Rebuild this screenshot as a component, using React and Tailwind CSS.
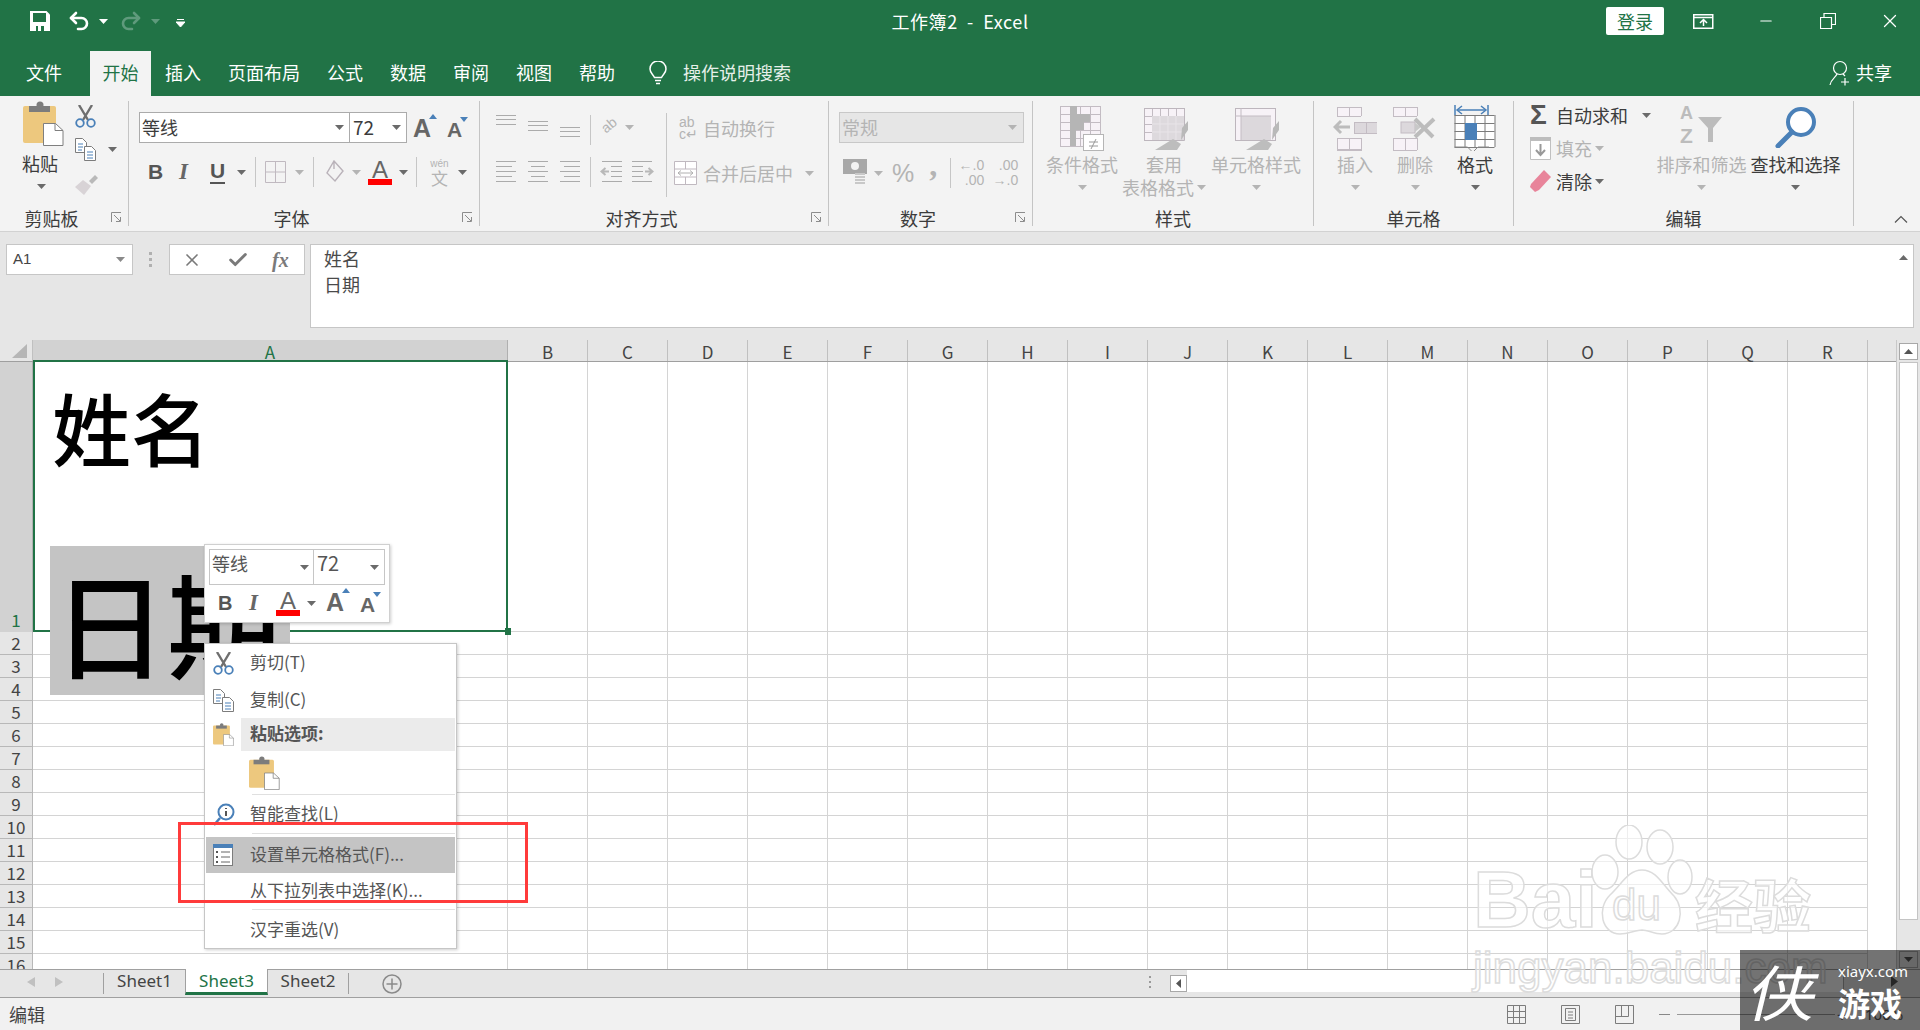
import React from 'react';
import { Undo2, Redo2, Minus, X, Check } from 'lucide-react';

const GREY = '#b4b4b4';
const BLUE = '#4a80b8';

const COLUMNS = ['B', 'C', 'D', 'E', 'F', 'G', 'H', 'I', 'J', 'K', 'L', 'M', 'N', 'O', 'P', 'Q', 'R'];
const ROWS = [2, 3, 4, 5, 6, 7, 8, 9, 10, 11, 12, 13, 14, 15];

function Tri({ color = '#6a6a6a', className = '', up = false }) {
  return (
    <svg width="9" height="5" viewBox="0 0 9 5" className={`shrink-0 ${className}`}>
      <path d={up ? 'M0 5h9L4.5 0z' : 'M0 0h9L4.5 5z'} fill={color} />
    </svg>
  );
}

function Launcher() {
  return (
    <svg width="11" height="11" viewBox="0 0 11 11" className="mb-[2px] mr-[6px]">
      <path d="M.5 10V.5H10M3 3l6 6M5 9.5h4.5V5" fill="none" stroke="#8c8c8c" />
    </svg>
  );
}

function PasteIcon({ w = 41, h = 45 }) {
  return (
    <svg width={w} height={h} viewBox="0 0 41 45" className="shrink-0">
      <rect x="0" y="5" width="33" height="37" rx="2" fill="#edc87e" />
      <rect x="6" y="5" width="21" height="6" fill="#7c7c7c" />
      <circle cx="17" cy="4" r="3.5" fill="#7c7c7c" />
      <path d="M20.5 22.5h12l7.5 7v15h-19.5z" fill="#fff" stroke="#7f7f7f" />
      <path d="M32 22.5v7h8" fill="none" stroke="#7f7f7f" />
    </svg>
  );
}

function ScissorsIcon({ size = 21 }) {
  return (
    <svg width={size} height={size + 2} viewBox="0 0 21 23" className="shrink-0">
      <path d="M4 0l9 15M17 0L8 15" stroke="#6f6f6f" strokeWidth="2.4" fill="none" />
      <circle cx="5" cy="18" r="3.8" fill="none" stroke={BLUE} strokeWidth="1.8" />
      <circle cx="16" cy="18" r="3.8" fill="none" stroke={BLUE} strokeWidth="1.8" />
    </svg>
  );
}

function CopyIcon() {
  return (
    <svg width="21" height="23" viewBox="0 0 21 23" className="shrink-0">
      <path d="M.5.5h7l4 4v10H.5z" fill="#fff" stroke="#7c7c7c" />
      <path d="M9.5 8.5h7l4 4v10h-11z" fill="#fff" stroke="#7c7c7c" />
      <path d="M3 6h5M3 9h5M3 12h4M12 14h6M12 17h6M12 20h6" stroke={BLUE} />
    </svg>
  );
}

function BrushIcon() {
  return (
    <svg width="23" height="21" viewBox="0 0 23 21" className="shrink-0">
      <path d="M14 7l6-6 3 3-6 6z" fill="#b9b9b9" />
      <path d="M0 13l8-7 8 6-7 9z" fill="#d8d3d6" />
    </svg>
  );
}

function BigA({ size = 25, color = '#666666', mark }) {
  return (
    <span className="relative inline-flex shrink-0 font-['Liberation_Sans',sans-serif] font-bold leading-none" style={{ fontSize: size, color }}>
      A
      {mark && (
        <svg width="8" height="5" viewBox="0 0 8 5" className="absolute right-[-6px] top-[-2px]">
          <path d={mark === 'up' ? 'M0 5h8L4 0z' : 'M0 0h8L4 5z'} fill={BLUE} />
        </svg>
      )}
    </span>
  );
}

function FontColorA({ barWidth = 24 }) {
  return (
    <span className="flex shrink-0 flex-col items-center">
      <span className="font-['Liberation_Sans',sans-serif] text-[24px] leading-[19px] text-[#666]">A</span>
      <span className="h-[6px] bg-[#ff0000]" style={{ width: barWidth }} />
    </span>
  );
}

function AlignV({ ys }) {
  return (
    <svg width="20" height="24" viewBox="0 0 20 24" className="shrink-0">
      {ys.map((y) => (
        <path key={y} d={`M0 ${y + 0.5}H20`} stroke="#ababab" />
      ))}
    </svg>
  );
}

function AlignH({ lines }) {
  return (
    <svg width="20" height="22" viewBox="0 0 20 22" className="shrink-0">
      {lines.map(([a, b], i) => (
        <path key={i} d={`M${a} ${i * 5 + 0.5}H${b}`} stroke="#ababab" />
      ))}
    </svg>
  );
}

function IndentIcon({ flip }) {
  return (
    <svg width="22" height="22" viewBox="0 0 22 22" className="shrink-0" style={flip ? { transform: 'scaleX(-1)' } : undefined}>
      <path d="M2 .5h20M11 5.5h11M11 10.5h11M11 15.5h11M2 20.5h20" stroke="#ababab" />
      <path d="M9 10.5H2M5.5 7l-4 3.5 4 3.5" stroke="#b8b8b8" strokeWidth="2" fill="none" />
    </svg>
  );
}

function MiniGrid({ cols, rows, cw = 10, ch = 10, stroke = '#c3bcc3', fill = '#f7f2f7' }) {
  const w = cols * cw;
  const h = rows * ch;
  const lines = [];
  for (let i = 0; i <= cols; i++) lines.push(`M${i * cw + 0.5} 0V${h}`);
  for (let i = 0; i <= rows; i++) lines.push(`M0 ${i * ch + 0.5}H${w}`);
  return (
    <>
      <rect width={w} height={h} fill={fill} />
      <path d={lines.join('')} stroke={stroke} fill="none" />
    </>
  );
}

function CondFormatIcon() {
  return (
    <svg width="44" height="45" viewBox="0 0 44 45">
      <MiniGrid cols={4} rows={5} cw={10} ch={8} />
      <rect x="10" y="0" width="7" height="8" fill="#b5b5b5" />
      <rect x="10" y="8" width="20" height="8" fill="#b5b5b5" />
      <rect x="10" y="16" width="14" height="8" fill="#b5b5b5" />
      <rect x="10" y="24" width="6" height="16" fill="#b5b5b5" />
      <rect x="23.5" y="28.5" width="20" height="16" fill="#fff" stroke="#b5b5b5" />
      <path d="M29 36h9M29 40h9M36 33l-5 10" stroke="#9a9a9a" fill="none" />
    </svg>
  );
}

function TableBrush() {
  return (
    <>
      <path d="M38 20l6-7v9l-7 10z" fill="#b9b9b9" />
      <path d="M29 31l8 5-4 6H11z" fill="#bdbdbd" />
    </>
  );
}

function TableStyleIcon() {
  return (
    <svg width="44" height="43" viewBox="0 0 44 43">
      <MiniGrid cols={5} rows={4} cw={8} ch={8} />
      <rect x="8" y="8" width="32" height="24" fill="#ddd9dd" />
      <path d="M16 8v24M24 8v24M32 8v24M8 16h32M8 24h32" stroke="#e8e4e8" />
      <path d="M.5.5h40v32H.5z" fill="none" stroke="#bdb6bd" />
      <TableBrush />
    </svg>
  );
}

function CellStyleIcon() {
  return (
    <svg width="44" height="43" viewBox="0 0 44 43">
      <rect x=".5" y=".5" width="40" height="32" fill="#f7f2f7" stroke="#bdb6bd" />
      <rect x="6" y="8" width="30" height="24" fill="#dcd8dc" />
      <path d="M6 0v32M0 8h36" stroke="#c3bcc3" />
      <TableBrush />
    </svg>
  );
}

function InsertIcon() {
  return (
    <svg width="44" height="44" viewBox="0 0 44 44">
      <g transform="translate(4 0)"><MiniGrid cols={2} rows={1} cw={12} ch={9} /></g>
      <g transform="translate(21 15)"><MiniGrid cols={2} rows={1} cw={12} ch={11} fill="#dcd8dc" /></g>
      <path d="M17 20H2M8 14l-6 6 6 6" fill="none" stroke="#bcbcbc" strokeWidth="3" />
      <g transform="translate(4 31)"><MiniGrid cols={2} rows={1} cw={12} ch={11} /></g>
      <path d="M4.500 31v13M28.500 31v13M4 43.500h25M16.500 31v12" stroke="#c3bcc3" />
    </svg>
  );
}

function DeleteIcon() {
  return (
    <svg width="44" height="44" viewBox="0 0 44 44">
      <MiniGrid cols={2} rows={1} cw={12} ch={9} />
      <rect x="8" y="15" width="14" height="11" fill="#dcd8dc" stroke="#c3bcc3" />
      <path d="M22 16l6 4-6 5z" fill="#c8c8c8" />
      <path d="M22 12l18 18M41 12L22 30" stroke="#bcbcbc" strokeWidth="4" />
      <g transform="translate(0 31)"><MiniGrid cols={2} rows={1} cw={12} ch={12} /></g>
      <path d="M.5 31v13M12.500 31v13M.5 43.500h23" stroke="#c3bcc3" />
    </svg>
  );
}

function FormatIcon() {
  return (
    <svg width="42" height="47" viewBox="0 0 42 47">
      <path d="M1 1v10M34 1v10M3 6h29" stroke={BLUE} strokeWidth="1.5" fill="none" />
      <path d="M8 2L3 6l5 4M27 2l5 4-5 4" stroke={BLUE} strokeWidth="1.5" fill="none" />
      <g transform="translate(0.500 11)"><MiniGrid cols={4} rows={4} cw={10} ch={8} stroke="#7b7b7b" fill="#fff" /></g>
      <rect x="11" y="19" width="12" height="17" fill={BLUE} />
      <path d="M.5 43h13l4 4M20 47l4-4h11" fill="none" stroke="#8a8a8a" />
    </svg>
  );
}

function SortIcon() {
  return (
    <svg width="43" height="40" viewBox="0 0 43 40">
      <text x="0" y="14" fontFamily="Liberation Sans" fontWeight="700" fontSize="18" fill="#bcbcbc">A</text>
      <text x="0" y="38" fontFamily="Liberation Sans" fontWeight="700" fontSize="21" fill="#bcbcbc">Z</text>
      <path d="M18 12h24l-9 11v14h-5V23z" fill="#bcbcbc" />
    </svg>
  );
}

function FindIcon({ size = 42 }) {
  return (
    <svg width={size} height={size} viewBox="0 0 42 42">
      <circle cx="26" cy="16" r="13" fill="#fff" stroke={BLUE} strokeWidth="4" />
      <path d="M17 26L3 40" stroke={BLUE} strokeWidth="5" strokeLinecap="round" />
    </svg>
  );
}

function Group({ width, title, launcher, children }) {
  return (
    <div className="flex h-[125px] shrink-0 flex-col border-r border-[#c4c4c4]" style={{ width }}>
      <div className="flex-1 min-h-0">{children}</div>
      <div className="flex h-[16px] items-center text-[18px] leading-[16px] text-[#3c3c3c]">
        <div className="flex-1 whitespace-nowrap text-center">{title}</div>
        {launcher && <div className="flex w-[25px] justify-end"><Launcher /></div>}
      </div>
    </div>
  );
}

function Sep({ className = '' }) {
  return <span className={`h-[30px] w-px shrink-0 bg-[#c6c6c6] ${className}`} />;
}

function RibbonButton({ icon, label, label2, disabled, width, iconClass = '', className = '' }) {
  return (
    <div className={`flex shrink-0 flex-col items-center ${className}`} style={{ width }}>
      <div className={`flex h-[50px] items-end justify-center ${iconClass}`}>{icon}</div>
      <div className={`mt-[2px] flex flex-col items-center text-[18px] leading-[23px] whitespace-nowrap ${disabled ? 'text-[#b4b4b4]' : 'text-[#3c3c3c]'}`}>
        <span>{label}</span>
        {label2 ? <span className="flex items-center gap-[3px]">{label2}<Tri color={GREY} /></span> : <Tri className="mt-[9px]" color={disabled ? GREY : '#6a6a6a'} />}
      </div>
    </div>
  );
}

function TitleBar() {
  return (
    <div className="grid h-[48px] grid-cols-[1fr_auto_1fr] items-center bg-[#217346] pb-[6px] text-white">
      <div className="flex items-center pl-[30px]">
        <svg width="20" height="20" viewBox="0 0 20 20">
          <path d="M0 0h16.500L20 3.500V20H0z" fill="#fff" />
          <path d="M3 2h13v9H3z" fill="#217346" />
          <path d="M6 15h2v5H6zM11 15h3v5h-3z" fill="#217346" />
        </svg>
        <Undo2 size={24} strokeWidth={2.6} className="ml-[17px]" />
        <Tri color="#fff" className="ml-[8px]" />
        <Redo2 size={24} strokeWidth={2.6} className="ml-[11px] text-[#5f9a7c]" />
        <Tri color="#5f9a7c" className="ml-[8px]" />
        <svg width="9" height="9" viewBox="0 0 9 9" className="ml-[16px] mt-[4px]">
          <path d="M1 .5h7M0 3h9L4.500 8z" stroke="#fff" strokeWidth="1" fill="#fff" />
        </svg>
      </div>
      <div className="whitespace-pre text-[18px] tracking-[0.6px]">工作簿2  -  Excel</div>
      <div className="flex items-center justify-end">
        <div className="flex h-[28px] w-[58px] items-center justify-center rounded-[2px] bg-white text-[18px] text-[#217346]">登录</div>
        <svg width="21" height="15" viewBox="0 0 21 15" className="ml-[29px]">
          <path d="M.75.75h19v13.500h-19zM0 3.500h20" fill="none" stroke="#fff" strokeWidth="1.500" />
          <path d="M10.500 12V6M7 9l3.500-3.500L14 9" fill="none" stroke="#fff" strokeWidth="1.500" />
        </svg>
        <Minus size={18} strokeWidth={1.4} className="ml-[43px]" />
        <svg width="16" height="16" viewBox="0 0 16 16" className="ml-[45px]">
          <path d="M.5 4.500h11v11H.5zM4 4.500V.5h11.500v11H11.500" fill="none" stroke="#fff" strokeWidth="1.200" />
        </svg>
        <X size={22} strokeWidth={1.4} className="ml-[43px] mr-[19px]" />
      </div>
    </div>
  );
}

function TabBar() {
  const tabs = ['插入', '页面布局', '公式', '数据', '审阅', '视图', '帮助'];
  return (
    <div className="flex h-[48px] items-end bg-[#217346] text-[18px] text-white">
      <div className="ml-[13px] flex h-[45px] items-center px-[13px] pb-[2px]">文件</div>
      <div className="ml-[15px] flex h-[45px] w-[61px] items-center justify-center bg-[#f3f3f3] pb-[2px] text-[#217346]">开始</div>
      {tabs.map((tab) => (
        <div key={tab} className="ml-px flex h-[45px] items-center px-[13px] pb-[2px]">{tab}</div>
      ))}
      <div className="flex h-[45px] items-center pb-[2px]">
        <svg width="20" height="24" viewBox="0 0 20 24" className="ml-[20px]">
          <path d="M6.500 16.500C5 13 2 12 2 8a8 8 0 0 1 16 0c0 4-3 5-4.500 8.500zM7 19.500h6M8 22.500h4" fill="none" stroke="#fff" strokeWidth="1.500" />
        </svg>
        <span className="ml-[15px] text-[#e6f0ea]">操作说明搜索</span>
      </div>
      <div className="ml-auto mr-[28px] flex h-[45px] items-center gap-[5px] pb-[2px]">
        <svg width="22" height="26" viewBox="0 0 22 26" fill="none" stroke="#fff" strokeWidth="1.200">
          <circle cx="11" cy="8" r="6.500" />
          <path d="M8 14c-1 3-6 5-7 11M14 14l2 2" />
          <path d="M16 18v7.500M12 22h8" />
        </svg>
        <span>共享</span>
      </div>
    </div>
  );
}

function Ribbon() {
  return (
    <div className="flex h-[136px] border-b border-[#d2d2d2] bg-[#f3f3f3] pt-[5px]">
      <Group width={129} title="剪贴板" launcher>
        <div className="flex">
          <div className="ml-[23px] flex w-[41px] flex-col">
            <PasteIcon />
            <span className="-ml-px mt-[5px] whitespace-nowrap text-[18px] leading-[24px] text-[#3c3c3c]">粘贴</span>
            <Tri className="ml-[14px] mt-[9px]" />
          </div>
          <div className="ml-[11px] flex flex-col pt-[4px]">
            <ScissorsIcon />
            <div className="mt-[10px] flex items-center"><CopyIcon /><Tri className="ml-[12px]" /></div>
            <div className="mt-[13px]"><BrushIcon /></div>
          </div>
        </div>
      </Group>

      <Group width={351} title="字体" launcher>
        <div className="ml-[10px] mt-[11px] flex h-[31px] items-center">
          <div className="flex h-[31px] w-[211px] items-center justify-between border border-[#ababab] bg-white pl-[2px] pr-[5px] text-[18px] text-[#3c3c3c]">等线<Tri /></div>
          <div className="flex h-[31px] w-[57px] items-center justify-between border border-l-0 border-[#ababab] bg-white pl-[3px] pr-[5px] text-[19px] text-[#3c3c3c]">72<Tri /></div>
          <span className="ml-[6px] mt-[2px]"><BigA size={25} mark="up" /></span>
          <span className="ml-[16px] mt-[5px]"><BigA size={21} mark="down" /></span>
        </div>
        <div className="mt-[13px] flex h-[32px] items-center">
          <span className="ml-[19px] w-[14px] font-['Liberation_Sans',sans-serif] text-[21px] font-bold text-[#555]">B</span>
          <span className="ml-[17px] w-[12px] font-['Liberation_Serif',serif] text-[23px] font-bold italic text-[#666]">I</span>
          <span className="ml-[19px] w-[15px] border-b-2 border-[#555] font-['Liberation_Sans',sans-serif] text-[21px] font-bold leading-[22px] text-[#555]">U</span>
          <Tri className="ml-[12px]" />
          <Sep className="ml-[9px]" />
          <svg width="21" height="22" viewBox="0 0 21 22" className="ml-[9px]">
            <path d="M.5.5h20v21H.5zM10.500.5v21M.5 11h20" fill="none" stroke="#c0b9c0" />
          </svg>
          <Tri className="ml-[9px]" color={GREY} />
          <Sep className="ml-[9px]" />
          <svg width="20" height="24" viewBox="0 0 20 24" className="ml-[11px]">
            <path d="M9 1l9 10-8 10-8-8zM9 1v8" fill="none" stroke="#b9b2b9" strokeWidth="1.400" />
          </svg>
          <Tri className="ml-[7px]" color={GREY} />
          <span className="ml-[7px]"><FontColorA /></span>
          <Tri className="ml-[7px]" />
          <Sep className="ml-[8px]" />
          <span className="ml-[12px] flex w-[21px] flex-col items-center leading-none text-[#b4b4b4]">
            <span className="font-['Liberation_Sans',sans-serif] text-[10px]">wén</span>
            <span className="text-[17px]">文</span>
          </span>
          <Tri className="ml-[8px]" />
        </div>
      </Group>

      <Group width={349} title="对齐方式" launcher>
        <div className="flex">
          <div className="ml-[16px] flex w-[170px] flex-col">
            <div className="mt-[14px] flex h-[24px] items-start">
              <AlignV ys={[0, 4, 9]} />
              <span className="ml-[12px]"><AlignV ys={[6, 10, 15]} /></span>
              <span className="ml-[12px]"><AlignV ys={[12, 16, 21]} /></span>
              <Sep className="ml-[10px]" />
              <span className="ml-[10px] rotate-[-40deg] font-['Liberation_Sans',sans-serif] text-[14px] leading-[20px] text-[#b4b4b4]">ab</span>
              <Tri className="ml-[8px] mt-[10px]" color={GREY} />
            </div>
            <div className="mt-[21px] flex h-[24px] items-center">
              <AlignH lines={[[0, 20], [0, 16], [0, 20], [0, 16], [0, 20]]} />
              <span className="ml-[12px]"><AlignH lines={[[0, 20], [3, 17], [0, 20], [3, 17], [0, 20]]} /></span>
              <span className="ml-[12px]"><AlignH lines={[[0, 20], [4, 20], [0, 20], [4, 20], [0, 20]]} /></span>
              <Sep className="ml-[10px]" />
              <span className="ml-[9px]"><IndentIcon /></span>
              <span className="ml-[10px]"><IndentIcon flip /></span>
            </div>
          </div>
          <Sep className="ml-0 mt-[12px] !h-[84px]" />
          <div className="flex flex-col text-[18px] text-[#b4b4b4]">
            <div className="mt-[11px] flex h-[32px] items-center">
              <span className="ml-[12px] flex w-[17px] flex-col font-['Liberation_Sans',sans-serif] text-[14px] leading-[12px]"><span>ab</span><span>c↵</span></span>
              <span className="ml-[7px]">自动换行</span>
            </div>
            <div className="mt-[13px] flex h-[32px] items-center">
              <svg width="23" height="24" viewBox="0 0 23 24" className="ml-[7px]">
                <path d="M.5.5h22v23H.5zM.5 8h22M.5 16h22M11.500.5V8M11.500 16v8" fill="#fff" stroke="#c0b9c0" />
                <path d="M4 12h15M7 9.500L4 12l3 2.500M16 9.500l3 2.500-3 2.500" fill="none" stroke="#b0b0b0" />
              </svg>
              <span className="ml-[6px]">合并后居中</span>
              <Tri className="ml-[12px]" color={GREY} />
            </div>
          </div>
        </div>
      </Group>

      <Group width={204} title="数字" launcher>
        <div className="ml-[10px] mt-[11px] flex h-[31px] w-[185px] items-center justify-between border border-[#c8c8c8] bg-[#e6e6e6] pl-[2px] pr-[6px] text-[18px] text-[#b4b4b4]">常规<Tri color={GREY} /></div>
        <div className="mt-[14px] flex h-[32px] items-center text-[#b4b4b4]">
          <svg width="24" height="28" viewBox="0 0 24 28" className="ml-[14px]">
            <rect width="24" height="15" fill="#a8a8a8" />
            <circle cx="12" cy="7" r="4" fill="#f3f3f3" />
            <path d="M12 15h10M12 18h10M12 21h10M12 24h10" stroke="#c8c8c8" strokeWidth="2" />
          </svg>
          <Tri className="ml-[7px]" color={GREY} />
          <span className="ml-[9px] font-['Liberation_Sans',sans-serif] text-[25px] leading-none">%</span>
          <span className="-mt-[16px] ml-[15px] font-['Liberation_Serif',serif] text-[32px] font-bold leading-[16px]">,</span>
          <Sep className="ml-[13px]" />
          <span className="ml-[7px] flex w-[26px] flex-col items-end font-['Liberation_Sans',sans-serif] text-[14px] leading-[15px]"><span>←.0</span><span>.00</span></span>
          <span className="ml-[10px] flex w-[24px] flex-col items-end font-['Liberation_Sans',sans-serif] text-[14px] leading-[15px]"><span>.00</span><span>→.0</span></span>
        </div>
      </Group>

      <Group width={281} title="样式">
        <div className="flex pl-[9px]">
          <RibbonButton disabled width={80} icon={<CondFormatIcon />} label="条件格式" />
          <RibbonButton disabled width={84} iconClass="ml-[3px]" icon={<TableStyleIcon />} label="套用" label2="表格格式" />
          <RibbonButton disabled width={92} className="ml-[4px]" iconClass="ml-[2px]" icon={<CellStyleIcon />} label="单元格样式" />
        </div>
      </Group>

      <Group width={200} title="单元格">
        <div className="flex pl-[11px]">
          <RibbonButton disabled width={60} icon={<InsertIcon />} label="插入" />
          <RibbonButton disabled width={60} icon={<DeleteIcon />} label="删除" />
          <RibbonButton width={60} icon={<FormatIcon />} label="格式" />
        </div>
      </Group>

      <Group width={340} title="编辑">
        <div className="flex">
          <div className="ml-[16px] flex w-[126px] flex-col text-[18px] leading-[24px] text-[#3c3c3c]">
            <div className="mt-[2px] flex h-[24px] items-center">
              <span className="w-[26px] font-['Liberation_Sans',sans-serif] text-[28px] font-bold leading-none text-[#555]">Σ</span>
              <span>自动求和</span>
              <Tri className="ml-[14px]" />
            </div>
            <div className="mt-[9px] flex h-[24px] items-center text-[#b4b4b4]">
              <svg width="21" height="23" viewBox="0 0 21 23" className="mr-[5px]">
                <path d="M.5.5h20v22H.5z" fill="#fff" stroke="#c0c0c0" />
                <path d="M0 0h21v4H0z" fill="#bdbdbd" />
                <path d="M10.500 7v11M6 13l4.500 5L15 13" fill="none" stroke="#999" strokeWidth="2" />
              </svg>
              填充
              <Tri className="ml-[3px]" color={GREY} />
            </div>
            <div className="mt-[9px] flex h-[24px] items-center">
              <svg width="21" height="22" viewBox="0 0 21 22" className="mr-[5px]">
                <path d="M14 0l7 7-12 13-4 2-5-5 1-3z" fill="#e8849a" />
              </svg>
              清除
              <Tri className="ml-[3px]" />
            </div>
          </div>
          <RibbonButton disabled width={91} iconClass="pb-[6px]" icon={<SortIcon />} label="排序和筛选" />
          <RibbonButton width={97} iconClass="pb-[3px]" icon={<FindIcon />} label="查找和选择" />
        </div>
      </Group>
      <div className="flex flex-1 items-end justify-center pb-[8px]">
        <svg width="14" height="8" viewBox="0 0 14 8" className="ml-[28px]"><path d="M1 7.500l6-6 6 6" fill="none" stroke="#555" strokeWidth="1.200" /></svg>
      </div>
    </div>
  );
}

function FormulaBar() {
  return (
    <div className="flex h-[108px] shrink-0 items-start bg-[#e6e6e6] pt-[12px]">
      <div className="ml-[6px] flex h-[31px] w-[127px] items-center justify-between border border-[#c6c6c6] bg-white pl-[6px] pr-[7px] font-['Liberation_Sans',sans-serif] text-[15px] text-[#444]">
        A1<Tri color="#8a8a8a" />
      </div>
      <div className="ml-[16px] flex h-[31px] flex-col items-center justify-center gap-[3px]">
        <span className="h-[3px] w-[3px] bg-[#b0b0b0]" />
        <span className="h-[3px] w-[3px] bg-[#b0b0b0]" />
        <span className="h-[3px] w-[3px] bg-[#b0b0b0]" />
      </div>
      <div className="ml-[17px] flex h-[31px] w-[136px] items-center border border-[#c6c6c6] bg-white text-[#7a7a7a]">
        <X size={20} strokeWidth={2} className="ml-[12px]" />
        <Check size={22} strokeWidth={3.2} className="ml-[25px]" />
        <span className="ml-[23px] font-['Liberation_Serif',serif] text-[20px] font-bold italic leading-none">fx</span>
      </div>
      <div className="ml-[5px] flex h-[84px] w-[1604px] border border-[#c6c6c6] bg-white pl-[13px] text-[18px] leading-[26px] text-[#4a4a4a]">
        <div className="flex-1">
          <div>姓名</div>
          <div>日期</div>
        </div>
        <Tri up color="#6a6a6a" className="mr-[5px] mt-[10px]" />
      </div>
    </div>
  );
}

function Sheet() {
  return (
    <div className="flex min-h-0 flex-1">
      <div className="flex w-[1896px] shrink-0 flex-col overflow-hidden bg-white text-[17px]">
        <div className="flex h-[22px] shrink-0 border-b border-[#9f9f9f] bg-[#e6e6e6] leading-[23px] text-[#444]">
          <div className="flex w-[33px] shrink-0 items-end justify-center border-r border-[#c0c0c0] pb-[3px] pl-[6px]">
            <svg width="15" height="14" viewBox="0 0 15 14"><path d="M15 0v14H0z" fill="#b6b6b6" /></svg>
          </div>
          <div className="w-[475px] shrink-0 border-r border-[#b0b0b0] bg-[#d2d2d2] text-center text-[#217346]">A</div>
          {COLUMNS.map((col) => (
            <div key={col} className="w-[80px] shrink-0 border-r border-[#c0c0c0] text-center">{col}</div>
          ))}
        </div>

        <div className="flex h-[270px] shrink-0">
          <div className="flex w-[33px] shrink-0 items-end justify-center border-r border-[#b0b0b0] bg-[#d2d2d2] text-[#217346]">1</div>
          <div className="relative z-10 -mt-[2px] w-[475px] shrink-0 border-2 border-[#217346] pl-[15px]">
            <div className="ml-[2px] mt-[20px] font-['Noto_Sans_CJK_SC',sans-serif] text-[79px] font-medium leading-[90px] text-black">姓名</div>
            <div className="mt-[74px] flex h-[149px] w-[240px] items-center bg-[#c4c4c4] pl-[3px] font-['Noto_Sans_CJK_SC',sans-serif] text-[114px] font-medium leading-none text-black">日期</div>
            <span className="absolute bottom-[-5px] right-[-5px] h-[7px] w-[6px] bg-[#217346]" />
          </div>
          {COLUMNS.map((col) => (
            <div key={col} className="w-[80px] shrink-0 border-r border-b border-[#d4d4d4]" />
          ))}
        </div>

        {ROWS.map((row) => (
          <div key={row} className="flex h-[23px] shrink-0">
            <div className="w-[33px] shrink-0 border-r border-b border-[#b8b8b8] bg-[#e6e6e6] text-center leading-[22px] text-[#444]">{row}</div>
            <div className="w-[475px] shrink-0 border-r border-b border-[#d4d4d4]" />
            {COLUMNS.map((col) => (
              <div key={col} className="w-[80px] shrink-0 border-r border-b border-[#d4d4d4]" />
            ))}
          </div>
        ))}
        <div className="flex h-[16px] shrink-0">
          <div className="w-[33px] shrink-0 overflow-hidden border-r border-[#b8b8b8] bg-[#e6e6e6] text-center leading-[22px] text-[#444]">16</div>
          <div className="w-[475px] shrink-0 border-r border-[#d4d4d4]" />
          {COLUMNS.map((col) => (
            <div key={col} className="w-[80px] shrink-0 border-r border-[#d4d4d4]" />
          ))}
        </div>
      </div>

      <div className="flex w-[24px] shrink-0 flex-col items-center border-l border-[#c8c8c8] bg-[#e6e6e6] pt-[3px]">
        <div className="flex h-[17px] w-[19px] items-center justify-center border border-[#a8a8a8] bg-white"><Tri up color="#555" /></div>
        <div className="mt-[2px] h-[558px] w-[19px] border border-[#c4c4c4] bg-white" />
        <div className="mt-auto mb-[1px] flex h-[17px] w-[19px] items-center justify-center border border-[#a8a8a8]"><Tri color="#555" /></div>
      </div>
    </div>
  );
}

function SheetTabs() {
  return (
    <div className="flex h-[29px] shrink-0 items-start border-y border-[#a0a0a0] bg-[#e6e6e6] font-['Noto_Sans',sans-serif] text-[17px] leading-[21px] text-[#444]">
      <div className="flex h-[23px] w-[103px] items-center">
        <svg width="8" height="10" viewBox="0 0 8 10" className="ml-[27px]"><path d="M8 0v10L0 5z" fill="#c0c0c0" /></svg>
        <svg width="8" height="10" viewBox="0 0 8 10" className="ml-[20px]"><path d="M0 0v10l8-5z" fill="#c0c0c0" /></svg>
      </div>
      <div className="mt-[3px] h-[21px] w-px bg-[#a0a0a0]" />
      <div className="h-[23px] w-[81px] text-center">Sheet1</div>
      <div className="-mt-px h-[26px] w-[83px] border-x border-b-[3px] border-x-[#a0a0a0] border-b-[#217346] bg-white text-center leading-[23px] text-[#217346]">Sheet3</div>
      <div className="h-[23px] w-[80px] text-center">Sheet2</div>
      <div className="mt-[3px] h-[21px] w-px bg-[#a0a0a0]" />
      <svg width="20" height="20" viewBox="0 0 20 20" className="ml-[33px] mt-[4px]">
        <circle cx="10" cy="10" r="9" fill="none" stroke="#8a8a8a" strokeWidth="1.500" />
        <path d="M10 4.500v11M4.500 10h11" stroke="#8a8a8a" strokeWidth="1.500" />
      </svg>
      <div className="ml-[747px] mt-[6px] flex flex-col gap-[3px]">
        <span className="h-[2px] w-[2px] bg-[#999]" />
        <span className="h-[2px] w-[2px] bg-[#999]" />
        <span className="h-[2px] w-[2px] bg-[#999]" />
      </div>
      <div className="ml-[19px] flex h-[17px] w-[17px] items-center justify-center self-center border border-[#a8a8a8] bg-white">
        <svg width="5" height="9" viewBox="0 0 5 9"><path d="M5 0v9L0 4.500z" fill="#555" /></svg>
      </div>
      <div className="h-[22px] w-[657px] border-r border-[#a8a8a8] bg-white" />
      <svg width="7" height="11" viewBox="0 0 7 11" className="ml-[47px] mt-[6px]"><path d="M0 0v11l7-5.500z" fill="#555" /></svg>
    </div>
  );
}

function StatusBar() {
  return (
    <div className="flex h-[32px] shrink-0 items-center bg-[#f1f1f1] text-[18px] text-[#444]">
      <span className="ml-[9px]">编辑</span>
      <svg width="20" height="19" viewBox="0 0 20 19" className="ml-[1462px]">
        <path d="M.5.5h18v18H.5zM6.500.5v18M12.500.5v18M.5 6.500h18M.5 12.500h18" fill="none" stroke="#7c7c7c" />
      </svg>
      <svg width="20" height="19" viewBox="0 0 20 19" className="ml-[34px]">
        <path d="M.5.5h18v18H.5zM4.500 3.500h10v12h-10zM7 7h5M7 10h5M7 13h5" fill="none" stroke="#7c7c7c" />
      </svg>
      <svg width="20" height="19" viewBox="0 0 20 19" className="ml-[34px]">
        <path d="M.5.500h18v18H.5zM.5 11.500h13V.5M6.500.5v11" fill="none" stroke="#7c7c7c" />
      </svg>
      <span className="ml-[24px] h-px w-[11px] bg-[#888]" />
      <span className="ml-[7px] h-px w-[158px] bg-[#999]" />
      <span className="ml-[2px] text-[#666]">+</span>
      <span className="ml-[18px] font-['Noto_Sans',sans-serif] text-[15px] text-[#555]">100%</span>
    </div>
  );
}

function MiniToolbar() {
  return (
    <div className="absolute left-[204px] top-[544px] z-20 h-[79px] w-[186px] border border-[#d0d0d0] bg-white pl-[4px] pt-[4px] shadow-[1px_1px_3px_rgba(0,0,0,0.2)]">
      <div className="flex h-[36px] text-[18px] text-[#555]">
        <div className="flex w-[105px] justify-between border border-[#c6c6c6] pl-[2px] pr-[4px] leading-[26px]">等线<Tri className="mt-[15px]" /></div>
        <div className="flex w-[71px] justify-between border border-l-0 border-[#c6c6c6] pl-[3px] pr-[5px] text-[20px] leading-[26px]">72<Tri className="mt-[15px]" /></div>
      </div>
      <div className="mt-[4px] flex h-[28px] items-center">
        <span className="ml-[9px] w-[14px] font-['Liberation_Sans',sans-serif] text-[20px] font-bold text-[#555]">B</span>
        <span className="ml-[17px] w-[12px] font-['Liberation_Serif',serif] text-[23px] font-bold italic text-[#666]">I</span>
        <span className="ml-[15px]"><FontColorA /></span>
        <Tri className="ml-[7px]" />
        <span className="ml-[10px]"><BigA size={25} mark="up" /></span>
        <span className="ml-[16px] mt-[3px]"><BigA size={21} mark="down" /></span>
      </div>
    </div>
  );
}

function MenuItem({ icon, label, height = 36, active }) {
  return (
    <div className={`flex items-center ${active ? 'bg-[#c4c4c4]' : ''}`} style={{ height }}>
      <div className="flex w-[44px] shrink-0 justify-center pr-[10px]">{icon}</div>
      <span className="-mt-[3px]">{label}</span>
    </div>
  );
}

function ContextMenu() {
  return (
    <div className="absolute left-[204px] top-[643px] z-20 h-[306px] w-[253px] border border-[#c6c6c6] bg-white pl-px pr-px pt-px text-[17px] text-[#555] shadow-[1px_1px_3px_rgba(0,0,0,0.2)]">
      <MenuItem icon={<ScissorsIcon />} label="剪切(T)" height={37} />
      <MenuItem icon={<CopyIcon />} label="复制(C)" />
      <div className="flex h-[33px]">
        <div className="flex w-[35px] shrink-0 items-center justify-center"><PasteIcon w={21} h={23} /></div>
        <div className="flex flex-1 items-center bg-[#ebebeb] pb-[3px] pl-[9px] font-bold">粘贴选项:</div>
      </div>
      <div className="ml-[46px] flex h-[44px] items-center border-b border-[#e0e0e0] pl-0"><span className="-ml-[3px]"><PasteIcon w={31} h={34} /></span></div>
      <div className="ml-[46px] h-[39px] border-b border-[#e0e0e0]" />
      <div className="-mt-[39px] h-[39px]">
        <MenuItem height={39} label="智能查找(L)" icon={(
          <svg width="22" height="24" viewBox="0 0 22 24" className="ml-[2px]">
            <circle cx="13" cy="9" r="7.500" fill="#fff" stroke={BLUE} strokeWidth="2" />
            <path d="M13 5v1M13 8v5" stroke="#555" strokeWidth="2" />
            <path d="M7 15L1 22" stroke={BLUE} strokeWidth="2.500" />
          </svg>
        )} />
      </div>
      <div className="mt-[3px]">
        <MenuItem active label="设置单元格格式(F)..." icon={(
          <svg width="20" height="22" viewBox="0 0 20 22">
            <rect x=".5" y=".5" width="19" height="21" fill="#fff" stroke="#7c7c7c" />
            <rect width="20" height="4" fill={BLUE} />
            <path d="M8 8h9M8 13h9M8 18h9" stroke="#666" />
            <path d="M3 8h2M3 13h2M3 18h2" stroke="#555" strokeWidth="2" />
          </svg>
        )} />
      </div>
      <MenuItem label="从下拉列表中选择(K)..." />
      <div className="ml-[46px] border-t border-[#e0e0e0]" />
      <MenuItem label="汉字重选(V)" height={40} />
    </div>
  );
}

function Watermarks() {
  return (
    <>
      <div className="pointer-events-none absolute left-[178px] top-[822px] z-30 h-[81px] w-[350px] border-[3px] border-[#ff3b3b]" />

      <div className="pointer-events-none absolute left-[1473px] top-[825px] z-30 w-[350px] font-['Liberation_Sans',sans-serif]">
        <div className="flex h-[110px] items-end">
          <span className="mb-[-5px] w-[119px] text-[80px] font-bold leading-[80px] text-white/60 [-webkit-text-stroke:1.5px_#dcdcdc]">Bai</span>
          <span className="relative h-[110px] w-[102px] shrink-0">
            <svg width="102" height="110" viewBox="0 0 102 110" className="absolute inset-0">
              <g fill="rgba(255,255,255,0.6)" stroke="#dcdcdc" strokeWidth="1.500">
                <ellipse cx="37" cy="17" rx="13" ry="17" />
                <ellipse cx="68" cy="22" rx="13" ry="17" />
                <ellipse cx="13" cy="47" rx="13" ry="17" />
                <ellipse cx="88" cy="52" rx="12" ry="17" />
                <path d="M50 45c14 0 20 14 32 26 12 14 6 38-12 38-8 0-14-4-20-4s-14 4-22 4C10 109 4 84 18 70c12-11 18-25 32-25z" />
              </g>
            </svg>
            <span className="absolute bottom-[8px] left-[20px] text-[44px] leading-none text-white/60 [-webkit-text-stroke:1.5px_#dcdcdc]">du</span>
          </span>
          <span className="ml-[1px] font-['Noto_Sans_CJK_SC',sans-serif] text-[58px] font-bold leading-[64px] text-white/60 [-webkit-text-stroke:1.5px_#dcdcdc]">经验</span>
        </div>
        <div className="mt-[8px] whitespace-nowrap text-[44px] leading-[50px] text-white/50 [-webkit-text-stroke:1.5px_#dcdcdc]">jingyan.baidu.com</div>
      </div>

      <div className="pointer-events-none absolute left-[1740px] top-[950px] z-40 flex h-[80px] w-[180px] bg-black/55 text-white">
        <span className="ml-[16px] mt-[4px] w-[74px] origin-center skew-x-[-12deg] scale-x-[1.15] font-['Noto_Sans_CJK_SC',sans-serif] text-[60px] leading-[72px]">侠</span>
        <div className="ml-[8px] flex flex-col">
          <span className="mt-[11px] font-['Noto_Sans',sans-serif] text-[15px] leading-[20px]">xiayx.com</span>
          <span className="mt-[3px] font-['Noto_Sans_CJK_SC',sans-serif] text-[32px] font-bold leading-[36px]">游戏</span>
        </div>
      </div>
    </>
  );
}

export default function App() {
  return (
    <div className="relative flex h-[1030px] w-[1920px] flex-col overflow-hidden bg-white font-['Noto_Sans_CJK_SC','Noto_Sans',sans-serif]">
      <TitleBar />
      <TabBar />
      <Ribbon />
      <FormulaBar />
      <Sheet />
      <SheetTabs />
      <StatusBar />
      <MiniToolbar />
      <ContextMenu />
      <Watermarks />
    </div>
  );
}
